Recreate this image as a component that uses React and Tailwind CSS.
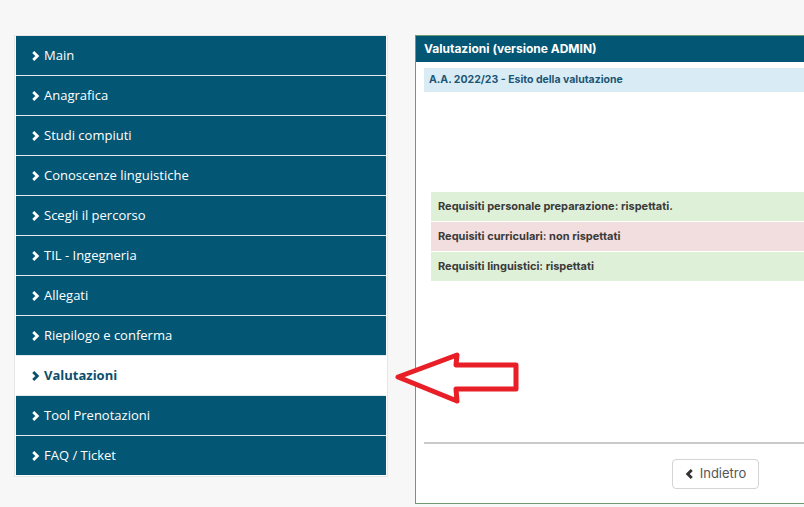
const menu = [
  "Main",
  "Anagrafica",
  "Studi compiuti",
  "Conoscenze linguistiche",
  "Scegli il percorso",
  "TIL - Ingegneria",
  "Allegati",
  "Riepilogo e conferma",
  "Valutazioni",
  "Tool Prenotazioni",
  "FAQ / Ticket",
]

const Chevron = ({ className }) => (
  <svg viewBox="0 0 10 12" className={className} fill="none">
    <path d="M2.5 1.5 L7 6 L2.5 10.5" stroke="currentColor" strokeWidth="3.2" strokeLinejoin="miter" />
  </svg>
)

const ChevronLeft = ({ className }) => (
  <svg viewBox="0 0 10 12" className={className} fill="none">
    <path d="M7.5 1.5 L3 6 L7.5 10.5" stroke="currentColor" strokeWidth="3.2" strokeLinejoin="miter" />
  </svg>
)

const poppins = { fontFamily: "Inter, 'Noto Sans', sans-serif" }

export default function App() {
  return (
    <div className="relative w-[804px] h-[507px] overflow-hidden bg-[#f7f7f7]">
      <div className="flex items-start pt-[35px] pl-[14px]">
        {/* sidebar */}
        <div
          className="w-[374px] shrink-0 bg-white border border-[#e6e6e6] px-px pb-px"
          style={{ fontFamily: "'Open Sans', sans-serif" }}
        >
          <div className="flex flex-col gap-px bg-[#e3ebef]">
            {menu.map((item) => {
              const active = item === "Valutazioni"
              return (
                <div
                  key={item}
                  className={
                    active
                      ? "h-[39px] flex items-center pl-[15px] gap-1 bg-white text-[#0b4f6c] font-bold text-[13px]"
                      : "h-[39px] flex items-center pl-[15px] gap-1 bg-[#035674] text-white text-[13px]"
                  }
                >
                  <Chevron className="w-[9px] h-[12px]" />
                  <span>{item}</span>
                </div>
              )
            })}
          </div>
        </div>

        {/* panel */}
        <div
          className="ml-[27px] w-[440px] h-[469px] shrink-0 bg-white border border-[#6e9c6e] flex flex-col"
          style={poppins}
        >
          <div className="h-[26px] bg-[#035674] text-white font-bold text-[12px] flex items-center px-2">
            Valutazioni (versione ADMIN)
          </div>
          <div className="px-2 flex flex-col">
            <div className="mt-[6px] h-6 bg-[#d9ecf6] text-[#1e5573] font-bold text-[10.5px] flex items-center px-[5px]">
              A.A. 2022/23 - Esito della valutazione
            </div>
            <div className="mt-[100px] ml-[7px] flex flex-col gap-px text-[11px] font-bold text-[#3a3a3a]">
              <div className="h-[29px] bg-[#dff0d8] flex items-center px-[7px]">
                Requisiti personale preparazione: rispettati.
              </div>
              <div className="h-[29px] bg-[#f2dede] flex items-center px-[7px]">
                Requisiti curriculari: non rispettati
              </div>
              <div className="h-[29px] bg-[#dff0d8] flex items-center px-[7px]">
                Requisiti linguistici: rispettati
              </div>
            </div>
            <div className="mt-[161px] h-[2px] bg-[#c9c9c9]" />
            <div className="mt-[15px] ml-[248px]">
              <button className="h-[30px] w-[87px] border border-[#d4d4d4] rounded-[4px] bg-white flex items-center justify-center gap-[6px] text-[13px] text-[#555]">
                <ChevronLeft className="w-[9px] h-[12px] text-[#333]" />
                <span>Indietro</span>
              </button>
            </div>
          </div>
        </div>
      </div>

      {/* annotation arrow */}
      <svg className="absolute left-0 top-0 pointer-events-none" width="804" height="507">
        <polygon
          points="398,377 457,355 456,365 516,365 516,389 456,389 457,401"
          fill="white"
          stroke="#e81f27"
          strokeWidth="5"
          strokeLinejoin="round"
        />
      </svg>
    </div>
  )
}
